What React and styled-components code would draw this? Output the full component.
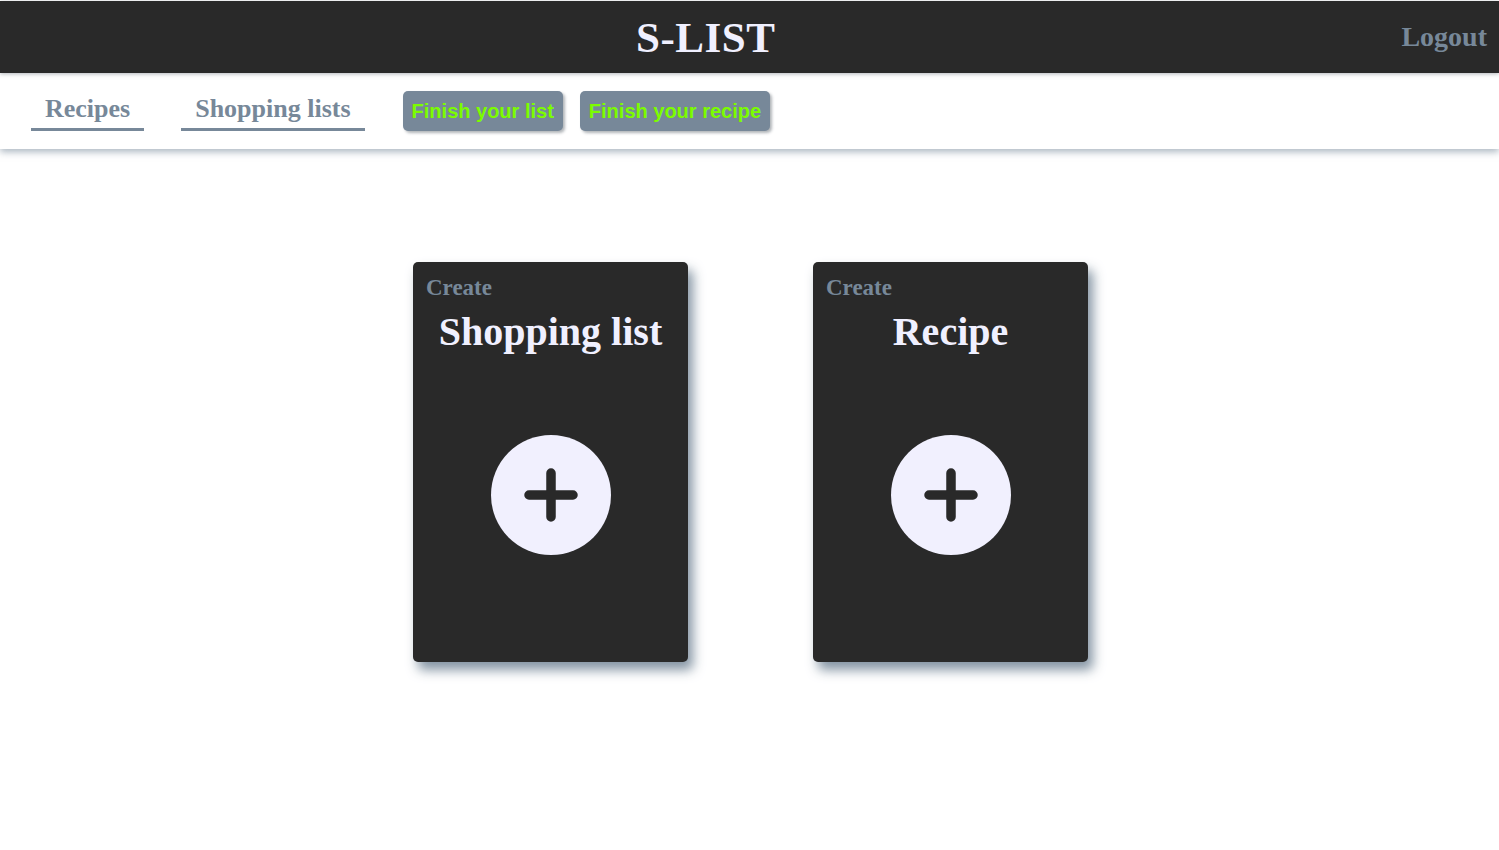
import React from 'react';
import styled, {createGlobalStyle} from "styled-components";

const GlobalStyle = createGlobalStyle`
  html, body {
    margin: 0;
    background: #ffffff;
    font-family: "Liberation Serif", "Times New Roman", serif;
  }
  body {
    min-height: 100vh;
  }
`;

const Header = styled.header`
  margin-top: 1px;
  height: 72px;
  background: #292929;
  display: flex;
  align-items: center;
  box-shadow: 0 1px 4px rgba(60, 70, 80, 0.4);
  position: relative;
  z-index: 2;
`;

const Title = styled.h1`
  flex: 1;
  margin: 0;
  padding-left: 10px;
  text-align: center;
  font-size: 43px;
  font-weight: bold;
  color: #f0f0ff;
  letter-spacing: 0.5px;
`;

const Logout = styled.a`
  padding-right: 12px;
  font-size: 28px;
  font-weight: bold;
  color: #778899;
  cursor: pointer;
`;

const Nav = styled.nav`
  height: 76px;
  display: flex;
  align-items: center;
  gap: 37px;
  padding-left: 31px;
  background: #ffffff;
  box-shadow: 0 3px 7px rgba(119, 136, 153, 0.6);
  position: relative;
  z-index: 1;
`;

const NavLink = styled.a`
  padding: 0 14px 3px;
  font-size: 26px;
  font-weight: bold;
  color: #778899;
  border-bottom: 3px solid #778899;
  line-height: 32px;
  margin-top: 1px;
  cursor: pointer;
`;

const Buttons = styled.div`
  display: flex;
  gap: 17px;
  margin-left: 1px;
`;

const DraftButton = styled.button`
  height: 40px;
  padding: 0 9px;
  border: none;
  border-radius: 5px;
  background: #778899;
  color: #7cfc00;
  font-family: "Liberation Sans", Arial, sans-serif;
  font-weight: bold;
  font-size: 20px;
  box-shadow: 2px 2px 3px rgba(60, 70, 80, 0.4);
  cursor: pointer;
`;

const Main = styled.main`
  display: flex;
  justify-content: center;
  gap: 125px;
  padding: 113px 0 60px 2px;
`;

const Card = styled.div`
  width: 275px;
  height: 400px;
  box-sizing: border-box;
  background: #292929;
  border-radius: 5px;
  box-shadow: 5px 8px 12px rgba(119, 136, 153, 0.9);
  padding: 13px 13px 0;
  display: flex;
  flex-direction: column;
`;

const Label = styled.div`
  font-size: 23px;
  font-weight: bold;
  color: #778899;
  line-height: 26px;
`;

const CardTitle = styled.h2`
  margin: 8px 0 0;
  font-size: 40px;
  font-weight: bold;
  color: #f0f0ff;
  text-align: center;
  line-height: 46px;
`;

const AddButton = styled.button`
  align-self: center;
  margin-top: 80px;
  width: 120px;
  height: 120px;
  border: none;
  border-radius: 50%;
  background: #f1f0fe;
  display: flex;
  align-items: center;
  justify-content: center;
  padding: 0;
  cursor: pointer;
`;

const PlusIcon = () => (
    <svg width="60" height="60" viewBox="0 0 60 60">
        <path d="M30 8V52M8 30H52" stroke="#292929" strokeWidth="9.5" strokeLinecap="round" fill="none"/>
    </svg>
)

const CreateCard = ({title}) => (
    <Card>
        <Label>Create</Label>
        <CardTitle>{title}</CardTitle>
        <AddButton><PlusIcon/></AddButton>
    </Card>
)

export default function App() {
    return (
        <>
            <GlobalStyle/>
            <Header>
                <Title>S-LIST</Title>
                <Logout>Logout</Logout>
            </Header>
            <Nav>
                <NavLink>Recipes</NavLink>
                <NavLink>Shopping lists</NavLink>
                <Buttons>
                    <DraftButton>Finish your list</DraftButton>
                    <DraftButton>Finish your recipe</DraftButton>
                </Buttons>
            </Nav>
            <Main>
                <CreateCard title="Shopping list"/>
                <CreateCard title="Recipe"/>
            </Main>
        </>
    );
}
